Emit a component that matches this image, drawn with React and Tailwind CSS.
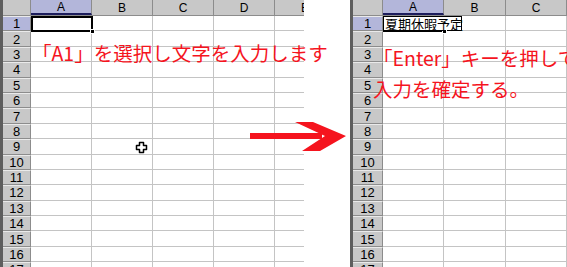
import React from 'react';

const ROWS = Array.from({ length: 17 }, (_, i) => i + 1);

function Sheet({ rowHeaderW, cols, active, children }) {
    return (
        <div className="relative h-full overflow-hidden bg-white border-l-[3px] border-[#5e5e5e]">
            <div className="flex h-[16px] bg-[#c8c8c8] border-b border-[#8c8c8c]">
                <div className="shrink-0 border-r border-[#8c8c8c]" style={{ width: rowHeaderW }} />
                {cols.map(c => (
                    <div key={c.label}
                        className={`shrink-0 flex items-center justify-center text-[12px] leading-none text-black border-r border-[#8c8c8c] ${c.label === active ? 'bg-[#b3b6da] border-b-2 border-b-[#1c1c5c]' : ''}`}
                        style={{ width: c.w }}>
                        {c.label}
                    </div>
                ))}
            </div>
            {ROWS.map(n => (
                <div key={n} className="flex h-[15.4px]">
                    <div className={`shrink-0 flex items-center justify-center text-[13px] leading-none text-black border-t border-t-[#eaeaea] border-b border-b-[#8c8c8c] border-r border-r-[#8c8c8c] ${n === 1 ? 'bg-[#b3b6da]' : 'bg-[#c8c8c8]'}`}
                        style={{ width: rowHeaderW }}>
                        {n}
                    </div>
                    {cols.map(c => (
                        <div key={c.label} className="shrink-0 border-r border-b border-[#c4c4c4]" style={{ width: c.w }} />
                    ))}
                </div>
            ))}
            {children}
        </div>
    );
}

export default function App() {
    const leftCols = [
        { label: 'A', w: 61 }, { label: 'B', w: 61 }, { label: 'C', w: 61 }, { label: 'D', w: 61 }, { label: 'E', w: 61 },
    ];
    const rightCols = [
        { label: 'A', w: 61 }, { label: 'B', w: 62 }, { label: 'C', w: 61 }, { label: 'D', w: 61 },
    ];

    return (
        <div className="relative w-[567px] h-[267px] overflow-hidden bg-white flex font-['Liberation_Sans','Noto_Sans_CJK_JP',sans-serif]">
            <div className="w-[304px] shrink-0 h-full">
                <Sheet rowHeaderW={28} cols={leftCols} active="A">
                    <div className="absolute left-[28px] top-[16px] w-[62px] h-[16px] border-2 border-black" />
                    <div className="absolute left-[87px] top-[29px] w-[5px] h-[5px] bg-black border border-white" />
                </Sheet>
            </div>
            <div className="w-[46px] shrink-0" />
            <div className="flex-1 h-full">
                <Sheet rowHeaderW={30} cols={rightCols} active="A">
                    <div className="absolute left-[30px] top-[16px] w-[79px] h-[15px] border border-black bg-white" />
                    <div className="absolute left-[30px] top-[30px] w-[61px] h-[2px] bg-black" />
                    <div className="absolute left-[89px] top-[29px] w-[5px] h-[5px] bg-black border border-white" />
                    <div className="absolute left-[32px] top-[16px] text-[13px] leading-[15px] text-black font-['Noto_Sans_CJK_JP',sans-serif]">夏期休暇予定</div>
                </Sheet>
            </div>

            <div className="absolute left-[32px] top-[43px] text-[19.5px] leading-none text-[#f5141e] whitespace-nowrap font-['Noto_Sans_CJK_JP',sans-serif]">
                「A1」を選択し文字を入力します
            </div>
            <div className="absolute left-[373px] top-[42px] text-[19.5px] leading-[31px] text-[#f5141e] whitespace-nowrap font-['Noto_Sans_CJK_JP',sans-serif]">
                <div>「Enter」キーを押して</div>
                <div>入力を確定する。</div>
            </div>

            <svg className="absolute left-[246px] top-[118px]" width="104" height="38" viewBox="246 118 104 38">
                <rect x="250" y="133" width="72" height="6" fill="#f5141e" />
                <polygon points="295,122 313,122 346,136 320,151 302,151 325,136" fill="#f5141e" />
            </svg>

            <svg className="absolute left-[135px] top-[141px]" width="13" height="13" viewBox="0 0 13 13">
                <path d="M4.5 1.5h4v3h3v4h-3v3h-4v-3h-3v-4h3z" fill="white" stroke="black" strokeWidth="1.5" strokeLinejoin="round" />
            </svg>
        </div>
    );
}
